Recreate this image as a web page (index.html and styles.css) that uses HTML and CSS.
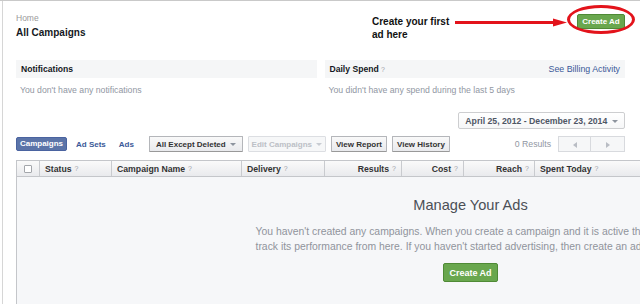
FILE: index.html
```html
<!DOCTYPE html>
<html lang="en">
<head>
  <meta charset="UTF-8" />
  <meta name="viewport" content="width=device-width, initial-scale=1.0"/>
  <title>Ads Manager</title>
  <link rel="stylesheet" href="styles.css">
</head>
<body>
  <div class="page">
    <div class="top">
      <div class="crumbs">
        <div class="home">Home</div>
        <h1 class="title">All Campaigns</h1>
      </div>
      <div class="hint">
        <p class="hintText">Create your first<br>ad here</p>
        <svg class="arrow" width="112" height="13" viewBox="0 0 112 13">
          <line x1="0" y1="7.5" x2="100" y2="7.5" stroke="#e3131b" stroke-width="3"/>
          <polygon points="98,3.5 112,7.5 98,11.5" fill="#e3131b"/>
        </svg>
        <div class="ringWrap">
          <button class="greenBtn">Create Ad</button>
          <span class="ring"></span>
        </div>
      </div>
    </div>

    <div class="panels">
      <div class="panel">
        <div class="panelHead"><b>Notifications</b></div>
        <div class="panelBody">You don't have any notifications</div>
      </div>
      <div class="panel">
        <div class="panelHead"><b>Daily Spend <span class="q">?</span></b><a href="#" class="link">See Billing Activity</a></div>
        <div class="panelBody">You didn't have any spend during the last 5 days</div>
      </div>
    </div>

    <div class="dateRow">
      <button class="dateBtn">April 25, 2012 - December 23, 2014 <span class="caret"></span></button>
    </div>

    <div class="toolbar">
      <a href="#" class="tab active">Campaigns</a>
      <a href="#" class="tab">Ad Sets</a>
      <a href="#" class="tab">Ads</a>
      <button class="btn filter">All Except Deleted <span class="caret"></span></button>
      <button class="btn disabled">Edit Campaigns <span class="caret light"></span></button>
      <button class="btn report">View Report</button>
      <button class="btn history">View History</button>
      <span class="results">0 Results</span>
      <div class="pager">
        <button class="pageBtn"><span class="tri left"></span></button>
        <button class="pageBtn"><span class="tri right"></span></button>
      </div>
    </div>

    <div class="table">
      <div class="thead">
        <div class="th check"><span class="box"></span></div>
        <div class="th">Status <span class="q">?</span></div>
        <div class="th">Campaign Name <span class="q">?</span></div>
        <div class="th">Delivery <span class="q">?</span></div>
        <div class="th num">Results <span class="q">?</span></div>
        <div class="th num">Cost <span class="q">?</span></div>
        <div class="th num">Reach <span class="q">?</span></div>
        <div class="th last">Spent Today <span class="q">?</span></div>
      </div>
      <div class="tbody">
        <h2 class="emptyTitle">Manage Your Ads</h2>
        <p class="emptyText">You haven't created any campaigns. When you create a campaign and it is active then you can<br>track its performance from here. If you haven't started advertising, then create an ad first.</p>
        <button class="greenBtn big">Create Ad</button>
      </div>
    </div>
  </div>
</body>
</html>
```

FILE: styles.css
```css
* {
  margin: 0;
  padding: 0;
  box-sizing: border-box;
  font-family: 'Liberation Sans', Arial, sans-serif;
}

html, body {
  height: 304px;
  overflow: hidden;
  background: #fff;
}

body {
  border-top: 1px solid #c9c9c9;
}

.page {
  margin-left: 2px;
  border-left: 1px solid #d6d6d6;
  padding: 0 15px 0 13px;
  width: 638px;
  height: 303px;
}

.top {
  height: 59px;
  padding-top: 12px;
  display: flex;
  justify-content: space-between;
  align-items: flex-start;
}

.home {
  font-size: 8.5px;
  line-height: 11px;
  color: #9a9a9a;
}

.title {
  margin-top: 2px;
  font-size: 10px;
  line-height: 13px;
  font-weight: bold;
  color: #141823;
}

.hint {
  display: flex;
  align-items: flex-start;
}

.hintText {
  margin-top: 2px;
  width: 83px;
  font-size: 10px;
  line-height: 13px;
  font-weight: bold;
  color: #111;
}

.arrow {
  margin-top: 2px;
}

.ringWrap {
  position: relative;
  margin-left: 10px;
  margin-top: 1px;
}

.ring {
  position: absolute;
  left: -10px;
  right: -10px;
  top: -9px;
  bottom: -5px;
  border: 3px solid #e3131b;
  border-radius: 50%;
}

.greenBtn {
  display: block;
  height: 15px;
  width: 48px;
  border: 1px solid #4f8a36;
  border-radius: 2px;
  background: #69a74e;
  color: #fff;
  font-size: 8px;
  font-weight: bold;
  white-space: nowrap;
}

.greenBtn.big {
  width: 55px;
  height: 19px;
  margin: 9px auto 0;
  font-size: 9px;
}

.panels {
  display: grid;
  grid-template-columns: 1fr 1fr;
  gap: 8px;
}

.panelHead {
  height: 18px;
  padding: 0 5px;
  background: #f5f6f7;
  display: flex;
  justify-content: space-between;
  align-items: center;
  font-size: 8.6px;
  color: #141823;
}

.link {
  color: #3b5998;
  text-decoration: none;
  font-size: 8.8px;
}

.panelBody {
  height: 25px;
  padding: 7px 4px;
  font-size: 8.7px;
  line-height: 11px;
  color: #9197a3;
}

.q {
  color: #9ea3ab;
  font-weight: normal;
  font-size: 7px;
}

.dateRow {
  margin-top: 9px;
  display: flex;
  justify-content: flex-end;
}

.dateBtn {
  height: 17px;
  width: 167px;
  border: 1px solid #cdced0;
  border-radius: 2px;
  background: linear-gradient(#fff, #f6f7f8);
  color: #4e5665;
  font-size: 8.7px;
  font-weight: bold;
  white-space: nowrap;
}

.caret {
  display: inline-block;
  margin-left: 2px;
  border-left: 3px solid transparent;
  border-right: 3px solid transparent;
  border-top: 3px solid #8d949e;
  vertical-align: middle;
}

.caret.light {
  border-top-color: #c8ccd2;
}

.toolbar {
  margin-top: 7px;
  height: 16px;
  display: flex;
  align-items: center;
}

.tab {
  font-size: 8px;
  font-weight: bold;
  color: #3b5998;
  text-decoration: none;
  margin-right: 13px;
  white-space: nowrap;
}

.tab.active {
  width: 51px;
  height: 14px;
  line-height: 12px;
  text-align: center;
  margin-right: 9px;
  background: #5b74a8;
  border: 1px solid #4a63a0;
  border-radius: 2px;
  color: #fff;
}

.btn {
  height: 16px;
  padding: 0;
  margin-right: 5px;
  border: 1px solid #b4b6ba;
  border-bottom-color: #999;
  border-radius: 1px;
  background: linear-gradient(#f9f9f9, #e9eaed);
  color: #333;
  font-size: 8px;
  font-weight: bold;
  white-space: nowrap;
}

.filter {
  margin-left: 2px;
  width: 94px;
}

.btn.disabled {
  width: 78px;
  color: #bcc0c6;
  border-color: #dcdee2;
  background: #f6f7f8;
}

.report {
  width: 56px;
}

.history {
  width: 58px;
}

.results {
  margin-left: auto;
  margin-right: 7px;
  font-size: 8.7px;
  color: #9197a3;
}

.pager {
  display: flex;
}

.pageBtn {
  width: 33px;
  height: 16px;
  border: 1px solid #d8dade;
  background: #f6f7f8;
}

.pageBtn + .pageBtn {
  border-left: none;
  width: 34px;
}

.tri {
  display: inline-block;
  border-top: 3px solid transparent;
  border-bottom: 3px solid transparent;
  vertical-align: middle;
}

.tri.left {
  border-right: 4px solid #b9bdc4;
}

.tri.right {
  border-left: 4px solid #b9bdc4;
}

.table {
  margin-top: 8px;
  width: 908px;
}

.thead {
  height: 17px;
  display: grid;
  grid-template-columns: 22px 72px 130px 83px 77px 62px 71px 1fr;
  border: 1px solid #c4c6ca;
  background: linear-gradient(#fafafa, #e9eaed);
}

.th {
  display: flex;
  align-items: center;
  gap: 3px;
  padding: 0 5px;
  border-left: 1px solid #c9cbcf;
  font-size: 8.7px;
  font-weight: bold;
  color: #333;
  white-space: nowrap;
}

.th.check {
  border-left: none;
  justify-content: center;
}

.th.num {
  justify-content: flex-end;
}

.box {
  width: 8px;
  height: 8px;
  border: 1px solid #a3a6ab;
  background: #fff;
  border-radius: 1px;
}

.tbody {
  height: 130px;
  background: #f6f7f9;
  border-left: 1px solid #c4c6ca;
  padding-top: 20px;
  text-align: center;
}

.emptyTitle {
  font-size: 14.6px;
  line-height: 17px;
  font-weight: normal;
  color: #4b4f56;
}

.emptyText {
  width: 430px;
  margin: 10px auto 0;
  text-align: left;
  white-space: nowrap;
  font-size: 10.4px;
  line-height: 15px;
  color: #90949c;
}
```
